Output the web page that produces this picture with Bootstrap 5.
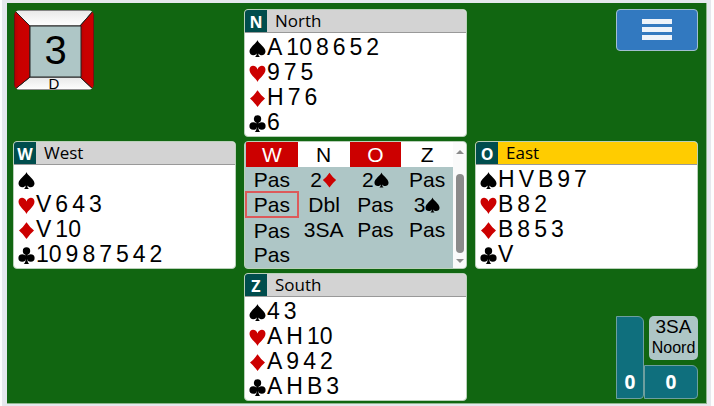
<!DOCTYPE html>
<html lang="nl">
<head>
<meta charset="utf-8">
<meta name="viewport" content="width=device-width, initial-scale=1">
<title>Bridge board 3</title>
<link href="https://cdn.jsdelivr.net/npm/bootstrap@5.3.0/dist/css/bootstrap.min.css" rel="stylesheet">
<style>
body{background:#fdfdfd;font-family:"Liberation Sans",Arial,sans-serif;color:#000;line-height:1}
.backdrop{background:#e5e8ed;margin:0 3px 0 2px;padding:3px 4px 2px 5px}
.table-felt{background:#116611;border:1px solid #8fb98f;border-width:0 1px 1px 0;padding:6px 8px 2px 6px;display:grid;grid-template-columns:repeat(3,minmax(0,1fr));gap:4px 8px}
.panel{background:#fff;border:1px solid #b9d0b9;border-radius:4px;overflow:hidden}
.hand-head{background:#d3d3d3;border-bottom:1px solid #999;height:23px;font:17px/22px "Open Sans","Noto Sans",sans-serif}
.hand-head.on-turn{background:#fc0}
.seat{background:#004d4d;color:#fff;width:22px;font-size:16px;font-weight:700;line-height:24px}
.suits{padding:2px 4px 1px 4px;font-size:23px}
.suit-row{height:25px;line-height:25px}
.holding{gap:4px;margin-left:1px}
.pip{width:17px;height:17px;flex:none}
.suit-row .pip{margin-top:2px}
.black{fill:#000}.red{fill:#c00}
.auction{table-layout:fixed;width:100%;font-size:21px;background:#aec6c6;text-align:center}
.auction th,.auction td{height:25px;line-height:23px;padding:0;font-weight:400}
.auction th{background:#fff}
.auction th.vul{background:#c00;color:#fff}
.auction td.alerted{border:2px solid #dc5a5a;border-radius:2px}
.auction .pip{width:15px;height:16px;vertical-align:-1px}
.auction-box{background:#aec6c6}
.scroller{width:13px;flex:none;background:#fafafa;padding:8px 0 5px}
.thumb{width:8px;border-radius:4px;background:#8b8b8b;margin:20px 0 6px}
.board-tile{width:80px;height:80px;position:relative;margin:1px 0 0 1px}
.board-tile svg{display:block}
.board-no{position:absolute;inset:15px 13px 13px 16px;font-size:40px;line-height:50px;text-align:center}
.dealer{position:absolute;inset:auto 0 0;font-size:15px;line-height:12px;text-align:center}
.menu-btn{width:82px;height:42px;background:#3279c0;border:1px solid #a3bed0;border-radius:4px;padding:0}
.score{display:grid;grid-template-columns:28px 54px;grid-template-rows:49px 34px;margin-bottom:2px}
.tricks{background:#0f6f7d;border:1px solid #6d9f9f;border-radius:0 6px 4px 0;color:#fff;font:bold 19px/32px "Open Sans",sans-serif;text-align:center}
.tricks.ns{grid-row:1/3}
.contract{background:#aec6c6;border-radius:5px;margin:0 0 5px 5px;text-align:center;font-size:16px;line-height:20px}
.contract strong{font-weight:400;font-size:19px;line-height:22px}
</style>
<script src="https://cdn.jsdelivr.net/npm/bootstrap@5.3.0/dist/js/bootstrap.bundle.min.js"></script>
</head>
<body>
<svg class="d-none" aria-hidden="true">
<symbol id="spade" viewBox="0 0 17 17"><path d="M8.5 0C9 3 16.500 7 16.500 11.500C16.500 15.500 11.500 16.500 9.300 13.500C9.400 15 9.700 16 11 17H6C7.300 16 7.600 15 7.700 13.500C5.500 16.500 .5 15.500 .5 11.500C.5 7 8 3 8.500 0Z"/></symbol>
<symbol id="heart" viewBox="0 0 17 17"><path d="M8.500 17C7.500 13.500 .5 9.500 .5 4.700C.5-.5 7-.6 8.500 4.500C10-.6 16.500-.5 16.500 4.700C16.500 9.500 9.500 13.500 8.500 17Z"/></symbol>
<symbol id="diamond" viewBox="0 0 17 17"><path d="M8.500 .3Q12 5.500 16 8.600Q12 12 8.500 17Q5 12 1 8.600Q5 5.500 8.500 .3Z"/></symbol>
<symbol id="club" viewBox="0 0 17 17"><circle cx="8.500" cy="4" r="3.700"/><circle cx="4.200" cy="11" r="3.800"/><circle cx="12.800" cy="11" r="3.800"/><path d="M7.600 6H9.400L10 9.500H12V12H9.300C9.400 14.500 10 16 11.300 17H5.700C7 16 7.600 14.500 7.700 12H5V9.500H7Z"/></symbol>
</svg>
<main class="backdrop">
<div class="table-felt">
  <div>
    <div class="board-tile">
      <svg width="80" height="80" viewBox="0 0 80 80" aria-hidden="true">
        <defs>
          <linearGradient id="pale" x2="0" y2="1"><stop offset="0" stop-color="#e8e8e8"/><stop offset="1" stop-color="#fff"/></linearGradient>
          <linearGradient id="crimson"><stop offset="0" stop-color="#b00000"/><stop offset=".3" stop-color="#c80000"/><stop offset="1" stop-color="#c00"/></linearGradient>
          <clipPath id="rounded"><rect width="80" height="80" rx="6"/></clipPath>
        </defs>
        <g clip-path="url(#rounded)" stroke="#222">
          <path d="M0 0H80L66 16H16Z" fill="url(#pale)"/>
          <path d="M0 80H80L66 67H16Z" fill="url(#pale)"/>
          <path d="M0 0L16 16V67L0 80Z" fill="url(#crimson)"/>
          <path d="M80 0L66 16V67L80 80Z" fill="url(#crimson)"/>
          <path d="M16 16H67V67H16Z" fill="#aec6c6"/>
        </g>
      </svg>
      <div class="board-no">3</div>
      <div class="dealer">D</div>
    </div>
  </div>

  <section class="panel">
    <div class="hand-head d-flex"><span class="seat text-center">N</span><span class="ms-2">North</span></div>
    <div class="suits">
      <div class="suit-row d-flex align-items-center"><svg class="pip black"><use href="#spade"/></svg><div class="holding d-flex"><span>A</span><span>10</span><span>8</span><span>6</span><span>5</span><span>2</span></div></div>
      <div class="suit-row d-flex align-items-center"><svg class="pip red"><use href="#heart"/></svg><div class="holding d-flex"><span>9</span><span>7</span><span>5</span></div></div>
      <div class="suit-row d-flex align-items-center"><svg class="pip red"><use href="#diamond"/></svg><div class="holding d-flex"><span>H</span><span>7</span><span>6</span></div></div>
      <div class="suit-row d-flex align-items-center"><svg class="pip black"><use href="#club"/></svg><div class="holding d-flex"><span>6</span></div></div>
    </div>
  </section>

  <div class="d-flex justify-content-end align-items-start">
    <button type="button" class="menu-btn btn" aria-label="Menu"><svg class="d-block mx-auto" width="30" height="22" viewBox="0 0 30 22" fill="#edf3fa"><path d="M0 0H30V5H0ZM0 8H30V13H0ZM0 16H30V21H0Z"/></svg></button>
  </div>

  <section class="panel">
    <div class="hand-head d-flex"><span class="seat text-center">W</span><span class="ms-2">West</span></div>
    <div class="suits">
      <div class="suit-row d-flex align-items-center"><svg class="pip black"><use href="#spade"/></svg></div>
      <div class="suit-row d-flex align-items-center"><svg class="pip red"><use href="#heart"/></svg><div class="holding d-flex"><span>V</span><span>6</span><span>4</span><span>3</span></div></div>
      <div class="suit-row d-flex align-items-center"><svg class="pip red"><use href="#diamond"/></svg><div class="holding d-flex"><span>V</span><span>10</span></div></div>
      <div class="suit-row d-flex align-items-center"><svg class="pip black"><use href="#club"/></svg><div class="holding d-flex"><span>10</span><span>9</span><span>8</span><span>7</span><span>5</span><span>4</span><span>2</span></div></div>
    </div>
  </section>

  <section class="panel auction-box d-flex">
    <div class="flex-fill">
      <table class="auction">
        <thead><tr><th class="vul">W</th><th>N</th><th class="vul">O</th><th>Z</th></tr></thead>
        <tbody>
          <tr><td>Pas</td><td>2<svg class="pip red"><use href="#diamond"/></svg></td><td>2<svg class="pip black"><use href="#spade"/></svg></td><td>Pas</td></tr>
          <tr><td class="alerted">Pas</td><td>Dbl</td><td>Pas</td><td>3<svg class="pip black"><use href="#spade"/></svg></td></tr>
          <tr><td>Pas</td><td>3SA</td><td>Pas</td><td>Pas</td></tr>
          <tr><td>Pas</td><td></td><td></td><td></td></tr>
        </tbody>
      </table>
    </div>
    <div class="scroller d-flex flex-column align-items-center" aria-hidden="true">
      <svg width="8" height="4" class="flex-shrink-0" viewBox="0 0 8 4" fill="#8b8b8b"><path d="M0 4L4 0L8 4Z"/></svg>
      <div class="thumb flex-fill"></div>
      <svg width="8" height="4" class="flex-shrink-0" viewBox="0 0 8 4" fill="#8b8b8b"><path d="M0 0L4 4L8 0Z"/></svg>
    </div>
  </section>

  <section class="panel">
    <div class="hand-head on-turn d-flex"><span class="seat text-center">O</span><span class="ms-2">East</span></div>
    <div class="suits">
      <div class="suit-row d-flex align-items-center"><svg class="pip black"><use href="#spade"/></svg><div class="holding d-flex"><span>H</span><span>V</span><span>B</span><span>9</span><span>7</span></div></div>
      <div class="suit-row d-flex align-items-center"><svg class="pip red"><use href="#heart"/></svg><div class="holding d-flex"><span>B</span><span>8</span><span>2</span></div></div>
      <div class="suit-row d-flex align-items-center"><svg class="pip red"><use href="#diamond"/></svg><div class="holding d-flex"><span>B</span><span>8</span><span>5</span><span>3</span></div></div>
      <div class="suit-row d-flex align-items-center"><svg class="pip black"><use href="#club"/></svg><div class="holding d-flex"><span>V</span></div></div>
    </div>
  </section>

  <div></div>

  <section class="panel">
    <div class="hand-head d-flex"><span class="seat text-center">Z</span><span class="ms-2">South</span></div>
    <div class="suits">
      <div class="suit-row d-flex align-items-center"><svg class="pip black"><use href="#spade"/></svg><div class="holding d-flex"><span>4</span><span>3</span></div></div>
      <div class="suit-row d-flex align-items-center"><svg class="pip red"><use href="#heart"/></svg><div class="holding d-flex"><span>A</span><span>H</span><span>10</span></div></div>
      <div class="suit-row d-flex align-items-center"><svg class="pip red"><use href="#diamond"/></svg><div class="holding d-flex"><span>A</span><span>9</span><span>4</span><span>2</span></div></div>
      <div class="suit-row d-flex align-items-center"><svg class="pip black"><use href="#club"/></svg><div class="holding d-flex"><span>A</span><span>H</span><span>B</span><span>3</span></div></div>
    </div>
  </section>

  <div class="d-flex justify-content-end align-items-end">
    <div class="score">
      <div class="tricks ns d-flex align-items-end justify-content-center">0</div>
      <div class="contract d-flex flex-column"><strong>3SA</strong><span>Noord</span></div>
      <div class="tricks">0</div>
    </div>
  </div>
</div>
</main>
</body>
</html>
